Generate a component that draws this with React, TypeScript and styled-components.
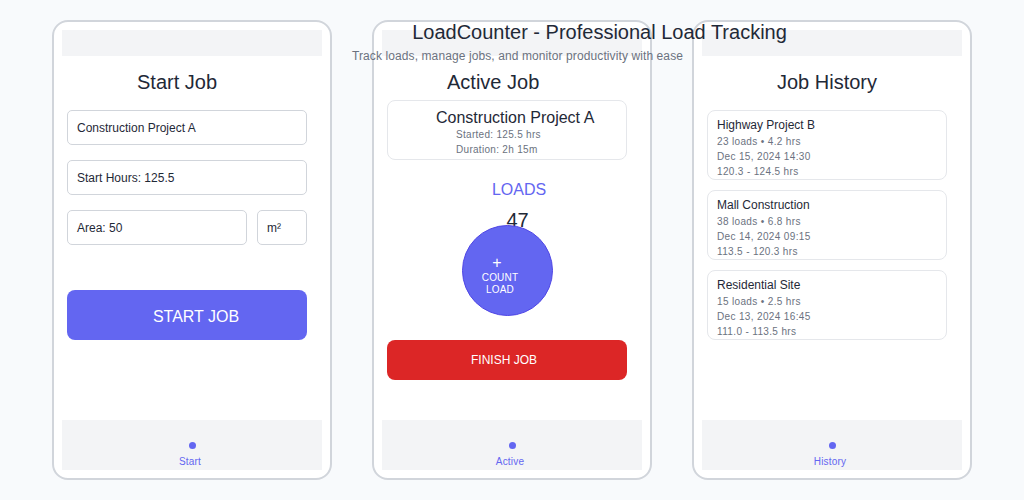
import React from 'react'
import styled, { createGlobalStyle } from 'styled-components'

const GlobalStyle = createGlobalStyle`
  * { box-sizing: border-box; }
  html, body {
    margin: 0;
    padding: 0;
    background: #f8fafc;
    font-family: "Liberation Sans", Arial, sans-serif;
    color: #1f2937;
  }
`

const Page = styled.div`
  position: relative;
  width: 1024px;
  height: 500px;
  padding-top: 20px;
  display: flex;
  justify-content: center;
  gap: 40px;
  overflow: hidden;
`

const Header = styled.header`
  position: absolute;
  top: 20px;
  left: 0;
  right: 0;
  display: flex;
  flex-direction: column;
  align-items: center;
  pointer-events: none;
  z-index: 2;
`

const Title = styled.h1`
  margin: 0 0 0 175px;
  font-size: 20px;
  line-height: 24px;
  font-weight: 400;
  color: #1f2937;
  white-space: nowrap;
`

const Subtitle = styled.p`
  margin: 5px 0 0 11px;
  font-size: 12px;
  line-height: 14px;
  letter-spacing: 0.1px;
  color: #6b7280;
  white-space: nowrap;
`

const Phone = styled.section`
  width: 280px;
  height: 460px;
  background: #ffffff;
  border: 2px solid #d1d5db;
  border-radius: 16px;
  padding: 8px;
  display: flex;
  flex-direction: column;
`

const StatusBar = styled.div`
  height: 26px;
  background: #f3f4f6;
  flex-shrink: 0;
`

const Content = styled.div`
  flex: 1;
  padding: 14px 15px 0 5px;
  display: flex;
  flex-direction: column;
`

const Heading = styled.h2<{ $indent: number }>`
  margin: 0;
  padding-left: ${(p) => p.$indent}px;
  font-size: 20px;
  line-height: 24px;
  font-weight: 400;
  color: #1f2937;
`

const Form = styled.div`
  margin-top: 16px;
  display: flex;
  flex-direction: column;
  gap: 15px;
`

const FieldRow = styled.div`
  display: flex;
  gap: 10px;
`

const Field = styled.div<{ $width?: number }>`
  width: ${(p) => (p.$width ? `${p.$width}px` : '100%')};
  height: 35px;
  border: 1px solid #d1d5db;
  border-radius: 5px;
  padding: 0 9px;
  display: flex;
  align-items: center;
  font-size: 12px;
  color: #1f2937;
`

const PrimaryButton = styled.button`
  margin-top: 45px;
  width: 240px;
  height: 50px;
  border: none;
  border-radius: 8px;
  background: #6366f1;
  color: #ffffff;
  font-family: inherit;
  font-size: 16px;
  line-height: 20px;
  padding: 4px 0 0 18px;
`

const JobCard = styled.div`
  margin-top: 6px;
  height: 60px;
  border: 1px solid #e5e7eb;
  border-radius: 8px;
  padding-top: 7px;
`

const JobTitle = styled.div`
  padding-left: 48px;
  font-size: 16px;
  line-height: 19px;
  color: #1f2937;
`

const JobMeta = styled.div`
  padding-left: 68px;
  font-size: 10px;
  line-height: 15px;
  letter-spacing: 0.3px;
  color: #6b7280;
`

const Counter = styled.div`
  display: flex;
  flex-direction: column;
  align-items: center;
`

const CounterLabel = styled.div`
  margin: 20px 0 0 24px;
  font-size: 16px;
  line-height: 20px;
  color: #6366f1;
`

const CounterValue = styled.div`
  margin: 8px 0 0 21px;
  font-size: 20px;
  line-height: 24px;
  color: #1f2937;
`

const CountButton = styled.button`
  margin: -7px 0 0 0;
  width: 91px;
  height: 91px;
  border-radius: 50%;
  border: 1.5px solid #4f46e5;
  background: #6366f1;
  color: #ffffff;
  font-family: inherit;
  display: flex;
  flex-direction: column;
  align-items: center;
  justify-content: center;
  padding: 6px 14px 0 0;
  position: relative;
  z-index: 1;
`

const Plus = styled.span`
  font-size: 16px;
  line-height: 14px;
  margin-right: 6px;
  margin-top: 4px;
`

const CountText = styled.span<{ $first?: boolean }>`
  font-size: 10px;
  line-height: 12px;
  letter-spacing: 0.2px;
  margin-top: ${(p) => (p.$first ? 2 : 0)}px;
`

const DangerButton = styled.button`
  margin-top: 24px;
  width: 240px;
  height: 40px;
  border: none;
  border-radius: 8px;
  background: #dc2626;
  color: #ffffff;
  font-family: inherit;
  font-size: 12px;
  padding: 0 6px 0 0;
`

const HistoryList = styled.div`
  margin-top: 16px;
  display: flex;
  flex-direction: column;
  gap: 10px;
`

const HistoryCard = styled.div`
  height: 70px;
  border: 1px solid #e5e7eb;
  border-radius: 8px;
  padding: 6px 9px 0;
`

const HistoryTitle = styled.div`
  font-size: 12px;
  line-height: 16px;
  color: #1f2937;
  margin-bottom: 1px;
`

const HistoryMeta = styled.div`
  font-size: 10px;
  line-height: 15px;
  letter-spacing: 0.35px;
  color: #6b7280;
`

const Nav = styled.nav`
  height: 50px;
  flex-shrink: 0;
  background: #f3f4f6;
  display: flex;
  flex-direction: column;
  align-items: center;
  padding-top: 22px;
`

const NavDot = styled.span`
  width: 7px;
  height: 7px;
  border-radius: 50%;
  background: #6366f1;
`

const NavLabel = styled.span`
  margin: 7px 4px 0 0;
  font-size: 10px;
  line-height: 12px;
  letter-spacing: 0.2px;
  color: #6366f1;
`

const history = [
  { name: 'Highway Project B', stats: '23 loads • 4.2 hrs', date: 'Dec 15, 2024 14:30', range: '120.3 - 124.5 hrs' },
  { name: 'Mall Construction', stats: '38 loads • 6.8 hrs', date: 'Dec 14, 2024 09:15', range: '113.5 - 120.3 hrs' },
  { name: 'Residential Site', stats: '15 loads • 2.5 hrs', date: 'Dec 13, 2024 16:45', range: '111.0 - 113.5 hrs' },
]

function PhoneFrame({ label, children }: { label: string; children: React.ReactNode }) {
  return (
    <Phone>
      <StatusBar />
      <Content>{children}</Content>
      <Nav>
        <NavDot />
        <NavLabel>{label}</NavLabel>
      </Nav>
    </Phone>
  )
}

export default function App() {
  return (
    <>
      <GlobalStyle />
      <Page>
        <PhoneFrame label="Start">
          <Heading $indent={70}>Start Job</Heading>
          <Form>
            <Field>Construction Project A</Field>
            <Field>Start Hours: 125.5</Field>
            <FieldRow>
              <Field $width={180}>Area: 50</Field>
              <Field $width={50}>m²</Field>
            </FieldRow>
          </Form>
          <PrimaryButton>START JOB</PrimaryButton>
        </PhoneFrame>

        <PhoneFrame label="Active">
          <Heading $indent={60}>Active Job</Heading>
          <JobCard>
            <JobTitle>Construction Project A</JobTitle>
            <JobMeta>Started: 125.5 hrs</JobMeta>
            <JobMeta>Duration: 2h 15m</JobMeta>
          </JobCard>
          <Counter>
            <CounterLabel>LOADS</CounterLabel>
            <CounterValue>47</CounterValue>
            <CountButton>
              <Plus>+</Plus>
              <CountText $first>COUNT</CountText>
              <CountText>LOAD</CountText>
            </CountButton>
          </Counter>
          <DangerButton>FINISH JOB</DangerButton>
        </PhoneFrame>

        <PhoneFrame label="History">
          <Heading $indent={70}>Job History</Heading>
          <HistoryList>
            {history.map((job) => (
              <HistoryCard key={job.name}>
                <HistoryTitle>{job.name}</HistoryTitle>
                <HistoryMeta>{job.stats}</HistoryMeta>
                <HistoryMeta>{job.date}</HistoryMeta>
                <HistoryMeta>{job.range}</HistoryMeta>
              </HistoryCard>
            ))}
          </HistoryList>
        </PhoneFrame>

        <Header>
          <Title>LoadCounter - Professional Load Tracking</Title>
          <Subtitle>Track loads, manage jobs, and monitor productivity with ease</Subtitle>
        </Header>
      </Page>
    </>
  )
}
